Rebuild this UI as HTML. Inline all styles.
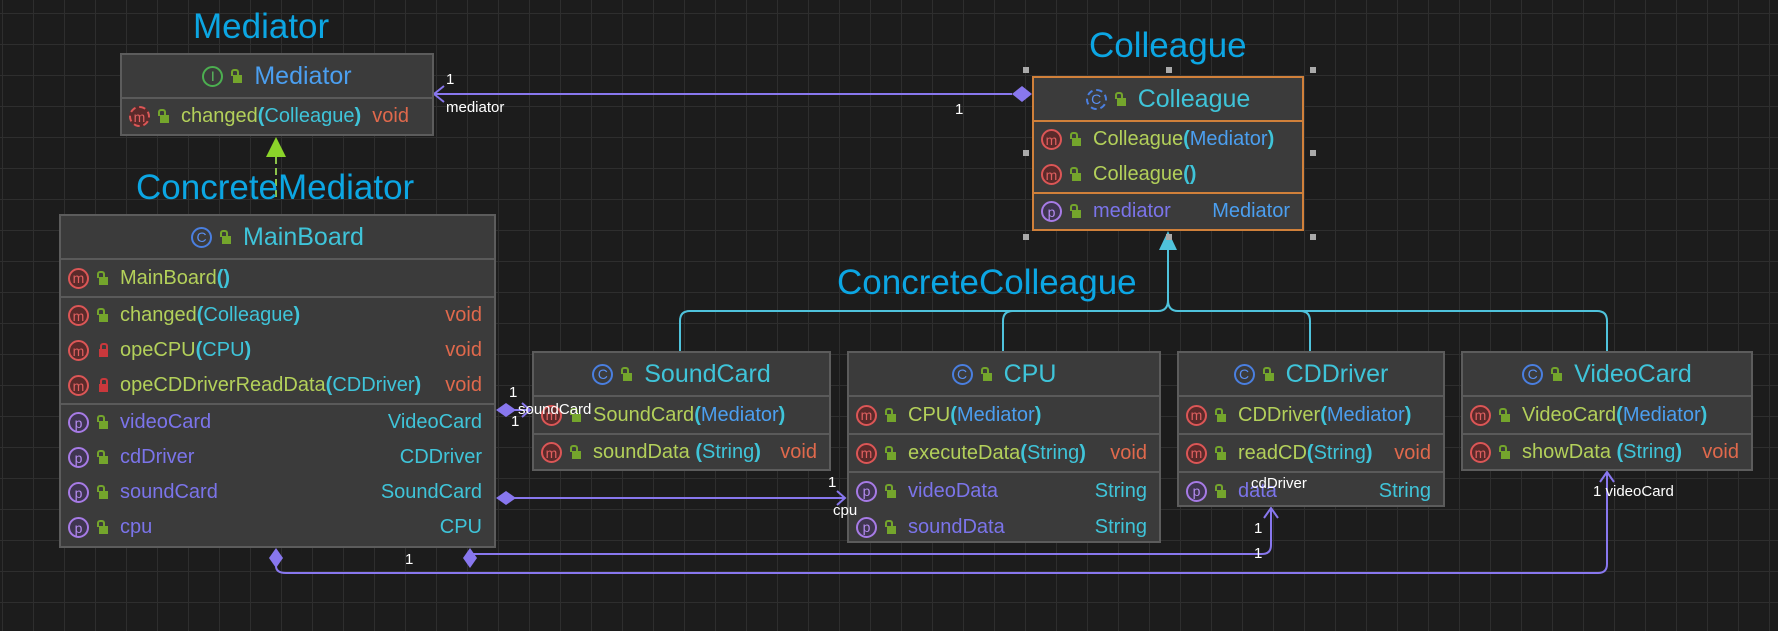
<!DOCTYPE html>
<html><head><meta charset="utf-8"><style>
*{margin:0;padding:0;box-sizing:border-box}
body{width:1778px;height:631px;overflow:hidden;background:#1c1c1c;font-family:"Liberation Sans",sans-serif;position:relative;
background-image:linear-gradient(#2e2e2e 1px,transparent 1px),linear-gradient(90deg,#2e2e2e 1px,transparent 1px);
background-size:31px 31px;background-position:2px 13px}
.box{position:absolute;background:#3b3b3b;border:2px solid #5c5c5c}
.hdr{height:44px;display:flex;align-items:center;justify-content:center;font-size:25px;color:#3fc4d9;border-bottom:2px solid #5a5a5a}
.sec{border-bottom:2px solid #5a5a5a}
.sec:last-child{border-bottom:none}
.row{height:35px;display:flex;align-items:center;font-size:20px;padding-left:7px;padding-right:12px;white-space:nowrap}
.ic{width:21px;height:21px;border-radius:50%;border:2px solid;display:inline-flex;align-items:center;justify-content:center;font-size:14px;line-height:1;flex:none}
.m{border-color:#dc5656;color:#e06060;background:#5a2a2a}
.p{border-color:#a77be6;color:#b58cf0;background:#3f3550}
.c{border-color:#4a7fe0;color:#5a8ff0}
.i{border-color:#4caf50;color:#5cbf60}
.lk{width:9px;height:8px;background:#74a52c;margin:0 12px 0 10px;position:relative;flex:none;margin-top:5px}
.lk:before{content:"";position:absolute;left:-2px;top:-6px;width:4px;height:5px;border:2px solid #74a52c;border-bottom:none;border-radius:3px 3px 0 0}
.lk.r{background:#c9383c}.lk.r:before{border-color:#c9383c;left:1px}
.mn{color:#b3d05a}.ty{color:#3fc4d9}.pr{color:#3fc4d9;font-weight:bold}.vd{color:#e0694c}.pp{color:#7b74ea}.bl{color:#4b9ff0}
.rt{margin-left:auto}
.lbl{position:absolute;color:#0ca6e3;font-size:35px;white-space:nowrap}
.t{position:absolute;color:#fff;font-size:15px;white-space:nowrap}
.h{position:absolute;width:6px;height:6px;background:#aaa}
</style></head><body>

<svg width="1778" height="631" style="position:absolute;left:0;top:0">
<g fill="none" stroke="#8877ee" stroke-width="2">
<path d="M434 94 H1012"/><path d="M444 86 L434 94 L444 102"/>
<path d="M506 410 H530"/><path d="M522 403 L530 410 L522 417"/>
<path d="M506 498 H845"/><path d="M837 491 L845 498 L837 505"/>
<path d="M470 554 H1262 Q1271 554 1271 545 V509"/><path d="M1264 518 L1271 508 L1278 518"/>
<path d="M276 566 Q276 573 286 573 H1598 Q1607 573 1607 564 V473"/><path d="M1600 482 L1607 472 L1614 482"/>
</g>
<g fill="#8877ee">
<path d="M1012 94 L1022 86 L1032 94 L1022 102Z"/>
<path d="M496 410 L506 403 L516 410 L506 417Z"/>
<path d="M496 498 L506 491 L516 498 L506 505Z"/>
<path d="M276 548 L283 558 L276 568 L269 558Z"/>
<path d="M470 548 L477 558 L470 568 L463 558Z"/>
</g>
<g fill="none" stroke="#4fc3dc" stroke-width="2">
<path d="M1168 249 V300 Q1168 311 1158 311 H690 Q680 311 680 321 V351"/>
<path d="M1013 311 Q1003 311 1003 321 V351"/>
<path d="M1168 300 Q1168 311 1178 311 H1597 Q1607 311 1607 321 V351"/>
<path d="M1300 311 Q1310 311 1310 321 V351"/>
</g>
<path d="M1168 231 L1159 250 H1177Z" fill="#4fc3dc"/>
<path d="M276 197 V156" stroke="#8bc34a" stroke-width="2" stroke-dasharray="7,4"/>
<path d="M276 137 L266 157 H286Z" fill="#8bd42a"/>
</svg>

<div class="lbl" style="left:193px;top:7px">Mediator</div>
<div class="lbl" style="left:136px;top:168px">ConcreteMediator</div>
<div class="lbl" style="left:1089px;top:26px">Colleague</div>
<div class="lbl" style="left:837px;top:263px">ConcreteColleague</div>

<div class="box" style="left:120px;top:53px;width:314px;height:83px">
<div class="hdr"><span class="ic i">I</span><span class="lk"></span><span class="bl">Mediator</span></div>
<div class="sec"><div class="row"><span class="ic m" style="border-style:dashed">m</span><span class="lk"></span><span class="mn">changed</span><span class="pr">(</span><span class="ty">Colleague</span><span class="pr">)</span>&nbsp;&nbsp;<span class="vd">void</span></div></div>
</div>

<div class="box" style="left:59px;top:214px;width:437px;height:334px">
<div class="hdr"><span class="ic c">C</span><span class="lk"></span>MainBoard</div>
<div class="sec"><div class="row" style="height:36px"><span class="ic m">m</span><span class="lk"></span><span class="mn">MainBoard</span><span class="pr">()</span></div></div>
<div class="sec">
<div class="row"><span class="ic m">m</span><span class="lk"></span><span class="mn">changed</span><span class="pr">(</span><span class="ty">Colleague</span><span class="pr">)</span><span class="rt vd">void</span></div>
<div class="row"><span class="ic m">m</span><span class="lk r"></span><span class="mn">opeCPU</span><span class="pr">(</span><span class="ty">CPU</span><span class="pr">)</span><span class="rt vd">void</span></div>
<div class="row"><span class="ic m">m</span><span class="lk r"></span><span class="mn">opeCDDriverReadData</span><span class="pr">(</span><span class="ty">CDDriver</span><span class="pr">)</span><span class="rt vd">void</span></div>
</div>
<div class="sec">
<div class="row"><span class="ic p">p</span><span class="lk"></span><span class="pp">videoCard</span><span class="rt ty">VideoCard</span></div>
<div class="row"><span class="ic p">p</span><span class="lk"></span><span class="pp">cdDriver</span><span class="rt ty">CDDriver</span></div>
<div class="row"><span class="ic p">p</span><span class="lk"></span><span class="pp">soundCard</span><span class="rt ty">SoundCard</span></div>
<div class="row"><span class="ic p">p</span><span class="lk"></span><span class="pp">cpu</span><span class="rt ty">CPU</span></div>
</div>
</div>

<div class="box" style="left:1032px;top:76px;width:272px;height:155px;border-color:#d0803a">
<div class="hdr" style="border-color:#d0803a"><span class="ic c" style="border-style:dashed">C</span><span class="lk"></span>Colleague</div>
<div class="sec" style="border-color:#d0803a">
<div class="row"><span class="ic m">m</span><span class="lk"></span><span class="mn">Colleague</span><span class="pr">(</span><span class="bl">Mediator</span><span class="pr">)</span></div>
<div class="row"><span class="ic m">m</span><span class="lk"></span><span class="mn">Colleague</span><span class="pr">()</span></div>
</div>
<div class="sec"><div class="row"><span class="ic p">p</span><span class="lk"></span><span class="pp">mediator</span><span class="rt bl">Mediator</span></div></div>
</div>
<div class="h" style="left:1023px;top:67px"></div><div class="h" style="left:1166px;top:67px"></div><div class="h" style="left:1310px;top:67px"></div>
<div class="h" style="left:1023px;top:150px"></div><div class="h" style="left:1310px;top:150px"></div>
<div class="h" style="left:1023px;top:234px"></div><div class="h" style="left:1166px;top:234px"></div><div class="h" style="left:1310px;top:234px"></div>

<div class="box" style="left:532px;top:351px;width:299px;height:120px">
<div class="hdr"><span class="ic c">C</span><span class="lk"></span>SoundCard</div>
<div class="sec"><div class="row" style="height:36px"><span class="ic m">m</span><span class="lk"></span><span class="mn">SoundCard</span><span class="pr">(</span><span class="bl">Mediator</span><span class="pr">)</span></div></div>
<div class="sec"><div class="row"><span class="ic m">m</span><span class="lk"></span><span class="mn">soundData</span>&nbsp;<span class="pr">(</span><span class="ty">String</span><span class="pr">)</span><span class="rt vd">void</span></div></div>
</div>

<div class="box" style="left:847px;top:351px;width:314px;height:192px">
<div class="hdr"><span class="ic c">C</span><span class="lk"></span>CPU</div>
<div class="sec"><div class="row" style="height:36px"><span class="ic m">m</span><span class="lk"></span><span class="mn">CPU</span><span class="pr">(</span><span class="bl">Mediator</span><span class="pr">)</span></div></div>
<div class="sec"><div class="row" style="height:36px"><span class="ic m">m</span><span class="lk"></span><span class="mn">executeData</span><span class="pr">(</span><span class="ty">String</span><span class="pr">)</span><span class="rt vd">void</span></div></div>
<div class="sec">
<div class="row" style="height:36px"><span class="ic p">p</span><span class="lk"></span><span class="pp">videoData</span><span class="rt ty">String</span></div>
<div class="row" style="height:36px"><span class="ic p">p</span><span class="lk"></span><span class="pp">soundData</span><span class="rt ty">String</span></div>
</div>
</div>

<div class="box" style="left:1177px;top:351px;width:268px;height:156px">
<div class="hdr"><span class="ic c">C</span><span class="lk"></span>CDDriver</div>
<div class="sec"><div class="row" style="height:36px"><span class="ic m">m</span><span class="lk"></span><span class="mn">CDDriver</span><span class="pr">(</span><span class="bl">Mediator</span><span class="pr">)</span></div></div>
<div class="sec"><div class="row" style="height:36px"><span class="ic m">m</span><span class="lk"></span><span class="mn">readCD</span><span class="pr">(</span><span class="ty">String</span><span class="pr">)</span><span class="rt vd">void</span></div></div>
<div class="sec"><div class="row" style="height:36px"><span class="ic p">p</span><span class="lk"></span><span class="pp">data</span><span class="rt ty">String</span></div></div>
</div>

<div class="box" style="left:1461px;top:351px;width:292px;height:120px">
<div class="hdr"><span class="ic c">C</span><span class="lk"></span>VideoCard</div>
<div class="sec"><div class="row" style="height:36px"><span class="ic m">m</span><span class="lk"></span><span class="mn">VideoCard</span><span class="pr">(</span><span class="bl">Mediator</span><span class="pr">)</span></div></div>
<div class="sec"><div class="row"><span class="ic m">m</span><span class="lk"></span><span class="mn">showData</span>&nbsp;<span class="pr">(</span><span class="ty">String</span><span class="pr">)</span><span class="rt vd">void</span></div></div>
</div>

<div class="t" style="left:446px;top:71px">1</div>
<div class="t" style="left:446px;top:99px">mediator</div>
<div class="t" style="left:955px;top:101px">1</div>
<div class="t" style="left:509px;top:384px">1</div>
<div class="t" style="left:518px;top:401px">soundCard</div>
<div class="t" style="left:511px;top:413px">1</div>
<div class="t" style="left:828px;top:474px">1</div>
<div class="t" style="left:833px;top:502px">cpu</div>
<div class="t" style="left:1251px;top:475px">cdDriver</div>
<div class="t" style="left:1254px;top:520px">1</div>
<div class="t" style="left:1254px;top:545px">1</div>
<div class="t" style="left:1593px;top:483px">1 videoCard</div>
<div class="t" style="left:405px;top:551px">1</div>
</body></html>
